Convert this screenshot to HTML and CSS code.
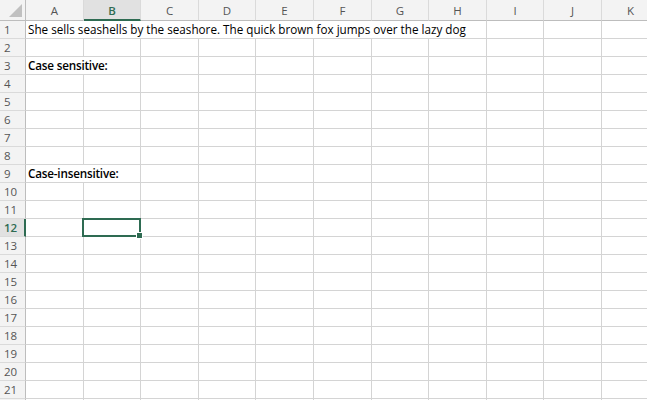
FILE: index.html
```html
<!DOCTYPE html>
<html lang="en">
<head>
  <meta charset="UTF-8">
  <title>Sheet1</title>
  <link rel="stylesheet" href="styles.css">
</head>
<body>

<div class="sheet" id="sheet"></div>

<script>
  const cols = ['A', 'B', 'C', 'D', 'E', 'F', 'G', 'H', 'I', 'J', 'K'];
  const rowCount = 22;
  const lastLabel = 21; // row 22 only peeks in at the bottom edge
  const active = { col: 'B', row: 12 };

  // only column A holds values; span = how many columns the text runs across
  const values = {
    1: { text: 'She sells seashells by the seashore. The quick brown fox jumps over the lazy dog', span: 8 },
    3: { text: 'Case sensitive:', span: 2, bold: true },
    9: { text: 'Case-insensitive:', span: 2, bold: true }
  };

  const sheet = document.getElementById('sheet');

  function cell(cls, text) {
    const div = document.createElement('div');
    div.className = cls;
    if (text) div.textContent = text;
    sheet.appendChild(div);
    return div;
  }

  cell('corner');
  cols.forEach(c => {
    cell('col-head' + (c === active.col ? ' selected' : ''), c);
  });

  for (let r = 1; r <= rowCount; r++) {
    cell('row-head' + (r === active.row ? ' selected' : ''), r <= lastLabel ? r : '');
    let i = 0;
    while (i < cols.length) {
      const v = i === 0 ? values[r] : null;
      const div = cell('cell', v ? v.text : '');
      if (v) {
        div.style.gridColumn = 'span ' + v.span;
        if (v.bold) div.classList.add('bold');
        i += v.span;
        continue;
      }
      if (cols[i] === active.col && r === active.row) div.classList.add('active');
      i++;
    }
  }
</script>

</body>
</html>
```

FILE: styles.css
```css
body {
  margin: 0;
  background: #fff;
  overflow: hidden;
}

.sheet {
  display: grid;
  grid-template-columns: 26px 58px 57px 58px 57px 58px 58px 57px 58px 57px 58px 58px;
  grid-template-rows: 21px;
  grid-auto-rows: 18px;
  width: 647px;
  overflow: hidden;
}

.corner,
.col-head,
.row-head {
  background: #f3f3f3;
  color: #555;
  font-family: "Open Sans", sans-serif;
  font-size: 11.5px;
  box-sizing: border-box;
}

.corner {
  position: relative;
  border-right: 1px solid #bdbdbd;
  border-bottom: 1px solid #bdbdbd;
}
.corner::after {
  content: "";
  position: absolute;
  right: 3px;
  bottom: 3px;
  width: 0;
  height: 0;
  border-left: 13px solid transparent;
  border-bottom: 13px solid #c0c0c0;
}

.col-head {
  display: flex;
  align-items: center;
  justify-content: center;
  border-right: 1px solid #dadada;
  border-bottom: 1px solid #bdbdbd;
  padding-top: 1px;
}

.row-head {
  display: flex;
  align-items: center;
  padding-left: 4px;
  border-right: 1px solid #bdbdbd;
  border-bottom: 1px solid #dadada;
}

.col-head.selected {
  background: #e1e1e1;
  color: #2e6b52;
  font-weight: 600;
  border-bottom: 2px solid #2e6b52;
}
.row-head.selected {
  background: #e1e1e1;
  color: #2e6b52;
  font-weight: 600;
  border-right: 2px solid #2e6b52;
}

.cell {
  position: relative;
  box-sizing: border-box;
  border-right: 1px solid #d4d4d4;
  border-bottom: 1px solid #d4d4d4;
  font-family: "Open Sans", sans-serif;
  font-size: 11.7px;
  color: #000;
  white-space: nowrap;
  padding: 0 2px;
  line-height: 17px;
}
.cell.bold {
  font-weight: 600;
  letter-spacing: -0.2px;
}

.cell.active::after {
  content: "";
  position: absolute;
  left: -2px;
  top: -1px;
  right: -1px;
  bottom: -1px;
  border: 2px solid #2e6b52;
}
.cell.active::before {
  content: "";
  position: absolute;
  right: -3px;
  bottom: -3px;
  width: 5px;
  height: 5px;
  background: #2e6b52;
  border: 1px solid #fff;
  z-index: 1;
}
```
